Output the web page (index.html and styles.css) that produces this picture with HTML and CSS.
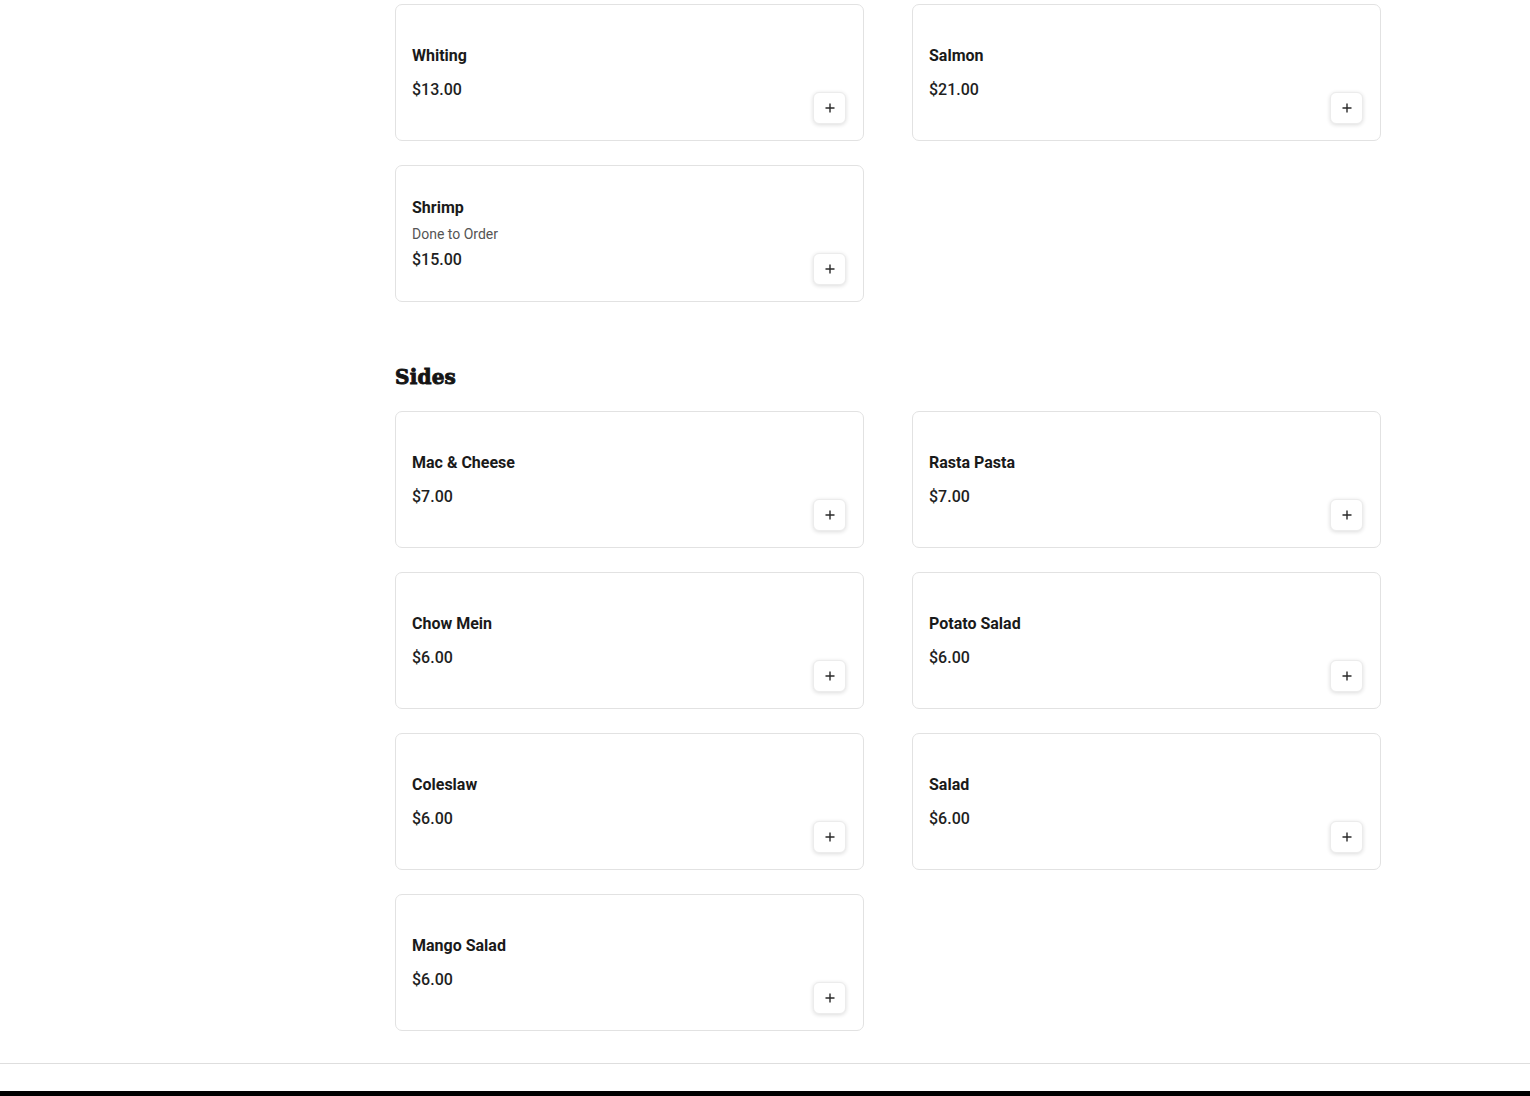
FILE: index.html
```html
<!DOCTYPE html>
<html lang="en">
<head>
<meta charset="utf-8">
<title>Menu</title>
<link rel="stylesheet" href="styles.css">
</head>
<body>
<div class="layout">
  <aside class="sidebar"></aside>
  <main class="menu">
    <section class="category">
      <div class="grid">
        <div class="card">
          <div class="info">
            <div class="name">Whiting</div>
            <div class="price">$13.00</div>
          </div>
          <button class="add" aria-label="Add"><svg viewBox="0 0 10 10" width="10" height="10"><path d="M5 0.5v9M0.5 5h9" stroke="#2a2a2a" stroke-width="1.4" fill="none"/></svg></button>
        </div>
        <div class="card">
          <div class="info">
            <div class="name">Salmon</div>
            <div class="price">$21.00</div>
          </div>
          <button class="add" aria-label="Add"><svg viewBox="0 0 10 10" width="10" height="10"><path d="M5 0.5v9M0.5 5h9" stroke="#2a2a2a" stroke-width="1.4" fill="none"/></svg></button>
        </div>
        <div class="card">
          <div class="info">
            <div class="name">Shrimp</div>
            <div class="desc">Done to Order</div>
            <div class="price">$15.00</div>
          </div>
          <button class="add" aria-label="Add"><svg viewBox="0 0 10 10" width="10" height="10"><path d="M5 0.5v9M0.5 5h9" stroke="#2a2a2a" stroke-width="1.4" fill="none"/></svg></button>
        </div>
      </div>
    </section>
    <section class="category">
      <h2 class="cat-title">Sides</h2>
      <div class="grid">
        <div class="card">
          <div class="info">
            <div class="name">Mac &amp; Cheese</div>
            <div class="price">$7.00</div>
          </div>
          <button class="add" aria-label="Add"><svg viewBox="0 0 10 10" width="10" height="10"><path d="M5 0.5v9M0.5 5h9" stroke="#2a2a2a" stroke-width="1.4" fill="none"/></svg></button>
        </div>
        <div class="card">
          <div class="info">
            <div class="name">Rasta Pasta</div>
            <div class="price">$7.00</div>
          </div>
          <button class="add" aria-label="Add"><svg viewBox="0 0 10 10" width="10" height="10"><path d="M5 0.5v9M0.5 5h9" stroke="#2a2a2a" stroke-width="1.4" fill="none"/></svg></button>
        </div>
        <div class="card">
          <div class="info">
            <div class="name">Chow Mein</div>
            <div class="price">$6.00</div>
          </div>
          <button class="add" aria-label="Add"><svg viewBox="0 0 10 10" width="10" height="10"><path d="M5 0.5v9M0.5 5h9" stroke="#2a2a2a" stroke-width="1.4" fill="none"/></svg></button>
        </div>
        <div class="card">
          <div class="info">
            <div class="name">Potato Salad</div>
            <div class="price">$6.00</div>
          </div>
          <button class="add" aria-label="Add"><svg viewBox="0 0 10 10" width="10" height="10"><path d="M5 0.5v9M0.5 5h9" stroke="#2a2a2a" stroke-width="1.4" fill="none"/></svg></button>
        </div>
        <div class="card">
          <div class="info">
            <div class="name">Coleslaw</div>
            <div class="price">$6.00</div>
          </div>
          <button class="add" aria-label="Add"><svg viewBox="0 0 10 10" width="10" height="10"><path d="M5 0.5v9M0.5 5h9" stroke="#2a2a2a" stroke-width="1.4" fill="none"/></svg></button>
        </div>
        <div class="card">
          <div class="info">
            <div class="name">Salad</div>
            <div class="price">$6.00</div>
          </div>
          <button class="add" aria-label="Add"><svg viewBox="0 0 10 10" width="10" height="10"><path d="M5 0.5v9M0.5 5h9" stroke="#2a2a2a" stroke-width="1.4" fill="none"/></svg></button>
        </div>
        <div class="card">
          <div class="info">
            <div class="name">Mango Salad</div>
            <div class="price">$6.00</div>
          </div>
          <button class="add" aria-label="Add"><svg viewBox="0 0 10 10" width="10" height="10"><path d="M5 0.5v9M0.5 5h9" stroke="#2a2a2a" stroke-width="1.4" fill="none"/></svg></button>
        </div>
      </div>
    </section>
  </main>
</div>
<footer class="footer">
  <div class="footer-space"></div>
  <div class="footer-bar"></div>
</footer>
</body>
</html>
```
FILE: styles.css
```css
* { box-sizing: border-box; }
html, body { margin: 0; padding: 0; background: #fff; }
body {
  font-family: Roboto, "Liberation Sans", sans-serif;
  color: #1a1a1a;
}
.layout {
  display: flex;
  gap: 32px;
  max-width: 1280px;
  margin: 0 auto;
  padding: 4px 24px 0 24px;
}
.sidebar { width: 214px; flex: 0 0 214px; }
.menu { flex: 1; min-width: 0; }
.category + .category { margin-top: 61px; }
.cat-title {
  margin: 0 0 20px 0;
  font-family: "DejaVu Serif", serif;
  font-weight: 700;
  font-size: 20px;
  line-height: 28px;
  color: #141414;
  -webkit-text-stroke: 0.9px #141414;
  letter-spacing: 0.2px;
}
.grid {
  display: grid;
  grid-template-columns: 1fr 1fr;
  column-gap: 48px;
  row-gap: 24px;
}
.card {
  height: 137px;
  border: 1px solid #e2e2e2;
  border-radius: 7px;
  padding: 16px 17px 16px 16px;
  display: flex;
  background: #fff;
}
.info {
  flex: 1;
  align-self: center;
  display: flex;
  flex-direction: column;
}
.name {
  font-size: 16px;
  line-height: 24px;
  font-weight: 700;
  color: #1a1a1a;
}
.desc {
  margin-top: 4px;
  font-size: 14px;
  line-height: 20px;
  color: #555;
}
.price {
  margin-top: 10px;
  font-size: 16px;
  line-height: 24px;
  font-weight: 500;
  color: #1f1f1f;
}
.desc + .price { margin-top: 4px; }
.add {
  align-self: flex-end;
  width: 33px;
  height: 32px;
  padding: 0;
  border: 1px solid #ececec;
  border-radius: 6px;
  background: #fff;
  box-shadow: 0 1px 4px rgba(0, 0, 0, 0.14);
  display: flex;
  align-items: center;
  justify-content: center;
  cursor: pointer;
}
.add svg { display: block; }
.footer {
  margin-top: 32px;
  border-top: 1px solid #dedede;
}
.footer-space { height: 27px; }
.footer-bar { height: 40px; background: #000; }
```
